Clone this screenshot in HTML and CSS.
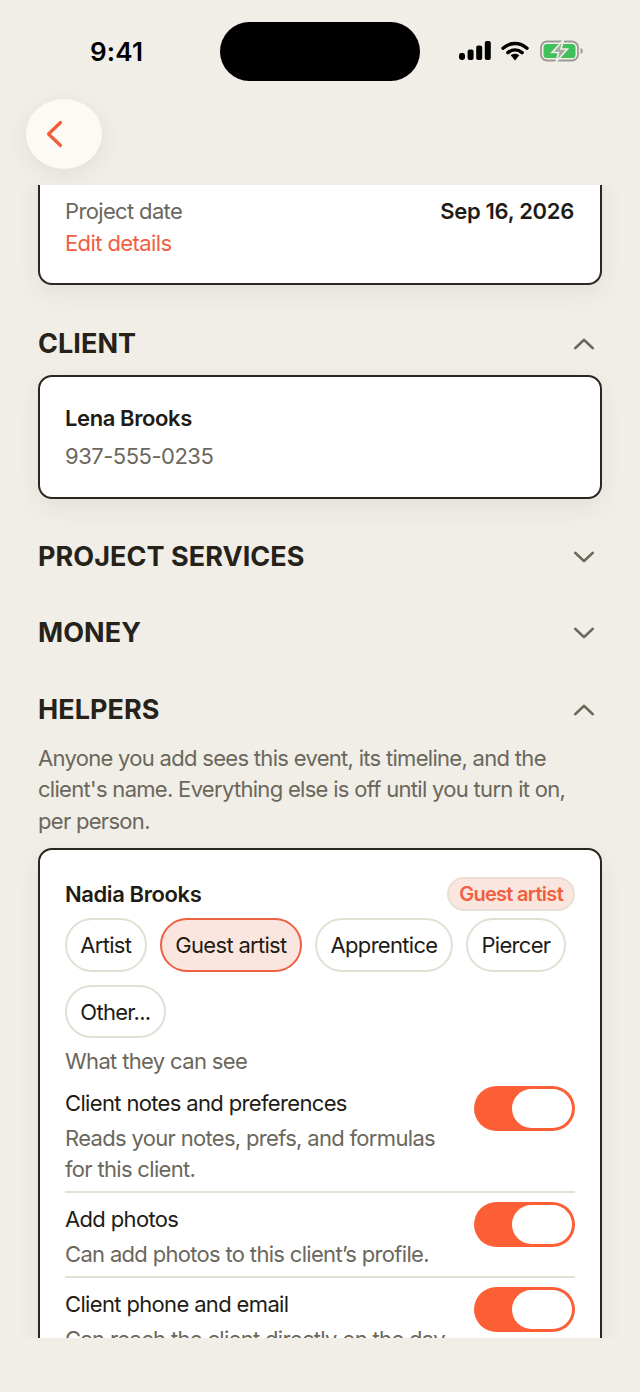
FILE: index.html
```html
<!DOCTYPE html>
<html lang="en">
<head>
<meta charset="utf-8">
<title>Event details</title>
<link rel="stylesheet" href="styles.css">
</head>
<body>
<div class="screen">
  <header class="top">
    <div class="status">
      <span class="time">9:41</span>
      <div class="island"></div>
      <div class="status-icons">
        <svg width="32" height="20" viewBox="0 0 32 20"><rect x="0" y="12" width="6" height="7" rx="2.4" fill="#000"/><rect x="8.6" y="8.5" width="6" height="10.5" rx="2" fill="#000"/><rect x="17.2" y="4.5" width="6" height="14.5" rx="2" fill="#000"/><rect x="25.8" y="0" width="6" height="19" rx="2" fill="#000"/></svg>
        <svg width="28" height="20" viewBox="0 0 28 20"><path d="M2 7.2C9.3.9 18.7.9 26 7.2" fill="none" stroke="#000" stroke-width="3.4" stroke-linecap="round"/><path d="M6.9 11.6c4.4-3.6 9.8-3.6 14.2 0" fill="none" stroke="#000" stroke-width="3.4" stroke-linecap="round"/><path d="M9.7 14.2c2.6-2 6-2 8.6 0L14 19.400z" fill="#000"/></svg>
        <svg class="battery" width="44" height="22" viewBox="0 0 44 22"><rect x="1" y="1.5" width="37" height="19" rx="6" fill="none" stroke="#9b9b95" stroke-width="1.8"/><rect x="3.5" y="4" width="32" height="14" rx="3.6" fill="#3fc05a"/><path d="M40.5 8v6c1.5-.5 2.3-1.6 2.3-3s-.8-2.500-2.300-3z" fill="#9b9b95"/><path d="M23.500 0 12 12.500h6.500L16 22l11.500-13H21z" fill="#a9a9a3" stroke="#f0eee7" stroke-width="1.600"/></svg>
      </div>
    </div>
    <button class="back" aria-label="Back">
      <svg width="18" height="28" viewBox="0 0 18 28"><path d="M15.500 2.500 3.500 14l12 11.500" fill="none" stroke="#f45c38" stroke-width="3.200" stroke-linecap="round" stroke-linejoin="round"/></svg>
    </button>
  </header>

  <main class="scroll">
    <section class="card card-clipped">
      <div class="row-between">
        <span class="muted">Project date</span>
        <span class="strong date">Sep 16, 2026</span>
      </div>
      <a class="link">Edit details</a>
    </section>

    <div class="section-head first">
      <h2>CLIENT</h2>
      <svg class="chev" width="22" height="14" viewBox="0 0 24 14"><path d="M2.500 11.500 12 2.500l9.500 9" fill="none" stroke="#6b675c" stroke-width="3" stroke-linecap="round" stroke-linejoin="round"/></svg>
    </div>
    <section class="card client">
      <div class="strong">Lena Brooks</div>
      <div class="muted phone">937-555-0235</div>
    </section>

    <div class="section-head services">
      <h2>PROJECT SERVICES</h2>
      <svg class="chev" width="22" height="14" viewBox="0 0 24 14"><path d="M2.500 2.500 12 11.500l9.500-9" fill="none" stroke="#6b675c" stroke-width="3" stroke-linecap="round" stroke-linejoin="round"/></svg>
    </div>
    <div class="section-head money">
      <h2>MONEY</h2>
      <svg class="chev" width="22" height="14" viewBox="0 0 24 14"><path d="M2.500 2.500 12 11.500l9.500-9" fill="none" stroke="#6b675c" stroke-width="3" stroke-linecap="round" stroke-linejoin="round"/></svg>
    </div>
    <div class="section-head helpers">
      <h2>HELPERS</h2>
      <svg class="chev" width="22" height="14" viewBox="0 0 24 14"><path d="M2.500 11.500 12 2.500l9.500 9" fill="none" stroke="#6b675c" stroke-width="3" stroke-linecap="round" stroke-linejoin="round"/></svg>
    </div>
    <p class="intro">Anyone you add sees this event, its timeline, and the client's name. Everything else is off until you turn it on, per person.</p>

    <section class="card helper">
      <div class="row-between helper-head">
        <span class="strong">Nadia Brooks</span>
        <span class="badge">Guest artist</span>
      </div>
      <div class="chips">
        <span class="chip">Artist</span>
        <span class="chip selected">Guest artist</span>
        <span class="chip">Apprentice</span>
        <span class="chip">Piercer</span>
        <span class="chip">Other...</span>
      </div>
      <div class="muted see">What they can see</div>

      <div class="perm">
        <div class="perm-text">
          <div class="perm-title">Client notes and preferences</div>
          <div class="perm-desc">Reads your notes, prefs, and formulas for this client.</div>
        </div>
        <span class="toggle"><span class="knob"></span></span>
      </div>
      <div class="perm">
        <div class="perm-text">
          <div class="perm-title">Add photos</div>
          <div class="perm-desc">Can add photos to this client’s profile.</div>
        </div>
        <span class="toggle"><span class="knob"></span></span>
      </div>
      <div class="perm">
        <div class="perm-text">
          <div class="perm-title">Client phone and email</div>
          <div class="perm-desc">Can reach the client directly on the day.</div>
        </div>
        <span class="toggle"><span class="knob"></span></span>
      </div>
    </section>
  </main>
</div>
</body>
</html>
```
FILE: styles.css
```css
* { box-sizing: border-box; }
html, body { margin: 0; padding: 0; }
body {
  width: 640px;
  height: 1392px;
  overflow: hidden;
  background: #f0eee7;
  font-family: Inter, "Liberation Sans", sans-serif;
  color: #1f1c16;
}
.screen { height: 1392px; display: flex; flex-direction: column; }

.top { height: 185px; flex: none; position: relative; z-index: 2; }
.status {
  height: 99px;
  position: relative;
  display: flex;
  justify-content: space-between;
  align-items: flex-start;
  padding: 36px 56px 0 90px;
}
.time { font-size: 26px; line-height: 32px; font-weight: 600; color: #000; letter-spacing: 0.2px; }
.island {
  position: absolute;
  left: 220px; top: 22px;
  width: 200px; height: 59px;
  border-radius: 30px;
  background: #000;
}
.status-icons { display: flex; align-items: center; gap: 10px; margin-top: -1px; margin-left: -3px; height: 32px; }
.battery { margin-left: 1px; }
.back {
  display: flex;
  align-items: center;
  justify-content: flex-start;
  width: 76px; height: 70px;
  margin-left: 26px;
  padding: 0 0 0 19px;
  border: 0;
  border-radius: 50%;
  background: #fbfaf4;
  box-shadow: 0 6px 22px rgba(60, 50, 30, 0.08);
}

.scroll {
  height: 1153px;
  flex: none;
  overflow: hidden;
  padding: 0 38px;
  position: relative;
}
.card {
  background: #fff;
  border: 2px solid #2a2720;
  border-radius: 14px;
  box-shadow: 0 8px 24px rgba(60, 50, 30, 0.07);
  padding: 0 25px;
  width: 564px;
}
.card-clipped { margin-top: -30px; height: 130px; padding-top: 38px; }
.row-between { display: flex; justify-content: space-between; align-items: center; }
.muted { font-size: 22px; line-height: 32px; color: #6b675c; letter-spacing: -0.65px; }
.strong { font-size: 22px; line-height: 32px; font-weight: 600; color: #1f1c16; letter-spacing: -0.4px; }
.date { letter-spacing: -0.3px; margin-right: 1px; }
.link { display: block; font-size: 22px; line-height: 32px; color: #f0603f; letter-spacing: -0.6px; }

.section-head { display: flex; justify-content: space-between; align-items: center; height: 36px; padding-right: 7px; }
.section-head h2 { margin: 0; font-size: 27px; line-height: 36px; font-weight: 700; color: #26221a; letter-spacing: 0.05px; }
.first { margin-top: 41px; }
.client { margin-top: 13px; height: 124px; padding-top: 25px; }
.phone { margin-top: 6px; letter-spacing: -0.5px; }
.services { margin-top: 40px; }
.money { margin-top: 40px; }
.helpers { margin-top: 41px; }
.intro { margin: 14.700px 0 0; font-size: 22px; line-height: 31.500px; color: #6b675c; letter-spacing: -0.7px; }

.helper { margin-top: 11px; height: 600px; padding-top: 27px; }
.helper-head { height: 34px; }
.badge {
  font-size: 20px; line-height: 30px; font-weight: 600;
  color: #f0603f;
  background: #fbe6df;
  border: 2px solid #eadfd4;
  border-radius: 17px;
  padding: 0 10px;
  height: 34px;
  letter-spacing: -0.7px;
}
.chips { display: flex; flex-wrap: wrap; gap: 13px 13.500px; margin-top: 7px; }
.chip {
  height: 53.500px;
  padding: 1px 13.300px 0;
  display: flex; align-items: center;
  font-size: 22px;
  letter-spacing: -0.7px;
  color: #1f1c16;
  background: #fff;
  border: 2px solid #e2dfd3;
  border-radius: 27px;
}
.chip.selected { background: #fbe6df; border-color: #ea6241; }
.see { margin-top: 7px; }
.perm {
  display: flex;
  justify-content: space-between;
  align-items: flex-start;
  border-bottom: 2px solid #e2dfd3;
  padding-bottom: 6px;
  margin-top: 10px;
}
.perm + .perm { margin-top: 0; padding-top: 10px; }
.perm-text { width: 400px; }
.perm-title { font-size: 22px; line-height: 32px; color: #1f1c16; letter-spacing: -0.65px; }
.perm-desc { margin-top: 4px; font-size: 22px; line-height: 31px; color: #6b675c; letter-spacing: -0.68px; }
.toggle {
  flex: none;
  width: 101px; height: 45px;
  margin-top: -1px;
  border-radius: 23px;
  background: #fc5f36;
  display: flex;
  justify-content: flex-end;
  padding: 3px;
}
.knob { width: 60px; height: 39px; border-radius: 20px; background: #fff; }
```
